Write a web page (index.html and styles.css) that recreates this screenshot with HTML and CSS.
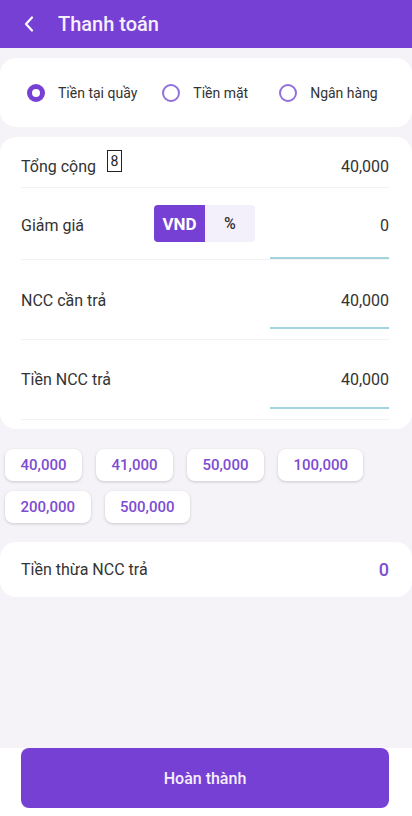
FILE: index.html
```html
<!DOCTYPE html>
<html lang="vi">
<head>
  <meta charset="UTF-8" />
  <meta name="viewport" content="width=device-width, initial-scale=1.0"/>
  <title>Thanh toán</title>
  <link rel="stylesheet" href="styles.css">
</head>
<body>
  <header class="app-bar">
    <button type="button" class="back-btn" aria-label="Quay lại">
      <svg width="14" height="18" viewBox="0 0 14 18">
        <polyline points="10,2.5 4,9 10,15.5" fill="none" stroke="#fff" stroke-width="2.2" stroke-linecap="round" stroke-linejoin="round"/>
      </svg>
    </button>
    <h1>Thanh toán</h1>
  </header>

  <main class="content">
    <div class="card methods">
      <label class="method">
        <span class="radio checked"></span>
        <span>Tiền tại quầy</span>
      </label>
      <label class="method">
        <span class="radio"></span>
        <span>Tiền mặt</span>
      </label>
      <label class="method bank">
        <span class="radio"></span>
        <span>Ngân hàng</span>
      </label>
    </div>

    <div class="card summary">
      <div class="row total-row">
        <div class="label">Tổng cộng <span class="badge">8</span></div>
        <div class="value">40,000</div>
      </div>
      <div class="row discount-row">
        <div class="label">Giảm giá</div>
        <div class="unit-toggle">
          <span class="unit active">VND</span>
          <span class="unit">%</span>
        </div>
        <div class="field">0</div>
      </div>
      <div class="row input-row">
        <div class="label">NCC cần trả</div>
        <div class="field">40,000</div>
      </div>
      <div class="row input-row last">
        <div class="label">Tiền NCC trả</div>
        <div class="field">40,000</div>
      </div>
    </div>

    <div class="quick-amounts">
      <button type="button" class="chip">40,000</button>
      <button type="button" class="chip">41,000</button>
      <button type="button" class="chip">50,000</button>
      <button type="button" class="chip">100,000</button>
      <button type="button" class="chip">200,000</button>
      <button type="button" class="chip">500,000</button>
    </div>

    <div class="card change">
      <div class="label">Tiền thừa NCC trả</div>
      <div class="change-value">0</div>
    </div>
  </main>

  <footer class="bottom-bar">
    <button type="button" class="submit-btn">Hoàn thành</button>
  </footer>
</body>
</html>
```

FILE: styles.css
```css
body {
  font-family: Roboto, "Noto Sans", Arial, sans-serif;
  background-color: #f5f3f7;
  color: #333;
  margin: 0;
  min-height: 100vh;
  display: flex;
  flex-direction: column;
}
button {
  font-family: inherit;
}
.app-bar {
  height: 48px;
  background-color: #7740d5;
  display: flex;
  align-items: center;
  padding-left: 22px;
}
.back-btn {
  background: none;
  border: none;
  padding: 0;
  width: 14px;
  height: 18px;
  display: flex;
}
.app-bar h1 {
  margin: 0 0 0 22px;
  font-size: 20px;
  font-weight: 500;
  color: #f6effd;
}
.content {
  flex: 1;
  padding-top: 10px;
}
.card {
  background: #fff;
  border-radius: 16px;
}
.methods {
  height: 69px;
  display: flex;
  align-items: center;
  padding-left: 27px;
  margin-bottom: 10px;
}
.method {
  display: flex;
  align-items: center;
  gap: 13px;
  font-size: 14px;
  color: #333;
}
.method + .method {
  margin-left: 25px;
}
.method.bank {
  margin-left: 31px;
}
.radio {
  width: 18px;
  height: 18px;
  box-sizing: border-box;
  border-radius: 50%;
  border: 2px solid #9170dc;
}
.radio.checked {
  border: 5px solid #7740d5;
}
.summary {
  padding: 0 23px 9px 21px;
}
.row {
  display: flex;
  align-items: flex-start;
  border-bottom: 1px solid #f3f3f3;
}
.label {
  font-size: 16px;
  line-height: 20px;
  color: #333;
  display: flex;
  align-items: flex-start;
}
.value {
  margin-left: auto;
  font-size: 16px;
  line-height: 20px;
}
.total-row {
  padding: 20px 0 10px;
}
.badge {
  display: inline-block;
  margin: -7px 0 0 11px;
  width: 15px;
  height: 22px;
  box-sizing: border-box;
  border: 1px solid #222;
  font-size: 14px;
  line-height: 20px;
  text-align: center;
  color: #222;
}
.field {
  margin-left: auto;
  width: 119px;
  text-align: right;
  font-size: 16px;
  line-height: 20px;
  border-bottom: 2px solid #a3d3de;
}
.discount-row {
  padding-top: 17px;
}
.discount-row .label {
  margin-top: 11px;
  width: 133px;
}
.discount-row .field {
  margin-top: 11px;
  padding-bottom: 21px;
}
.unit-toggle {
  display: flex;
  height: 37px;
  border-radius: 4px;
  overflow: hidden;
  background-color: #f4f0fb;
}
.unit {
  width: 50px;
  display: flex;
  align-items: center;
  justify-content: center;
  font-size: 16px;
  font-weight: 500;
  color: #333;
}
.unit.active {
  width: 51px;
  background-color: #7740d5;
  color: #fff;
  font-size: 17px;
  font-weight: 700;
}
.input-row {
  padding: 31px 0 10px;
}
.input-row .field {
  padding-bottom: 16px;
}
.input-row.last {
  padding-top: 30px;
}
.input-row.last .field {
  padding-bottom: 17px;
}
.quick-amounts {
  display: flex;
  flex-wrap: wrap;
  gap: 10px 14px;
  padding: 20px 5px 0;
  margin-bottom: 19px;
}
.chip {
  height: 32px;
  padding: 0 15.5px;
  border: none;
  border-radius: 8px;
  background: #fff;
  box-shadow: 0 1px 3px rgba(0, 0, 0, 0.18);
  font-size: 15px;
  font-weight: 500;
  color: #7d4dd1;
}
.change {
  height: 55px;
  display: flex;
  align-items: center;
  padding: 0 23px 0 21px;
}
.change-value {
  margin-left: auto;
  font-size: 18px;
  font-weight: 500;
  color: #7d4dd1;
}
.bottom-bar {
  background: #fff;
  padding: 0 23px 8px 21px;
}
.submit-btn {
  display: block;
  width: 100%;
  height: 60px;
  border: none;
  border-radius: 8px;
  background-color: #7740d5;
  color: #f6effd;
  font-size: 16px;
  font-weight: 500;
}
```
